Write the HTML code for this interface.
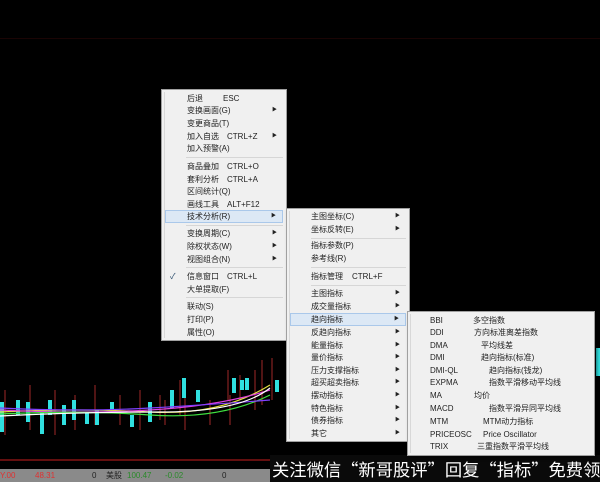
<!DOCTYPE html>
<html><head><meta charset="utf-8"><style>
*{margin:0;padding:0;box-sizing:border-box}
body{width:600px;height:482px;background:#000;position:relative;overflow:hidden;font-family:"Liberation Sans","Noto Sans CJK SC",sans-serif}
.menu{position:absolute;background:#f0f0f0;border:1px solid #a0a0a0;box-shadow:2px 2px 3px rgba(0,0,0,.5)}
.menu:before{content:"";position:absolute;left:2px;top:2px;bottom:2px;width:1px;background:#d8d8d8}
.it{position:absolute;left:3px;right:3px;height:13px;font-size:8px;line-height:13px;color:#222;white-space:nowrap}
.it.hl{background:#dce8f5;border:1px solid #aac8ea;line-height:11px}
.it .a{position:absolute;right:6px;top:0;font-size:5px}
.it .k{position:absolute}
.sep{position:absolute;left:24px;right:3px;height:1px;background:#d6d6d6}
</style></head><body>
<div style="position:absolute;left:0;top:38px;width:600px;height:1px;background:#1a0404"></div>
<svg style="position:absolute;left:0;top:340px" width="600" height="125">
<g stroke="#a02828" stroke-width="1">
<line x1="5" y1="50" x2="5" y2="95"/><line x1="30" y1="45" x2="30" y2="90"/><line x1="55" y1="50" x2="55" y2="95"/><line x1="75" y1="55" x2="75" y2="90"/><line x1="95" y1="45" x2="95" y2="85"/><line x1="120" y1="55" x2="120" y2="85"/><line x1="140" y1="50" x2="140" y2="90"/><line x1="165" y1="60" x2="165" y2="85"/><line x1="185" y1="55" x2="185" y2="90"/><line x1="210" y1="60" x2="210" y2="85"/><line x1="230" y1="55" x2="230" y2="85"/><line x1="255" y1="30" x2="255" y2="70"/><line x1="262" y1="20" x2="262" y2="65"/><line x1="272" y1="18" x2="272" y2="60"/><line x1="160" y1="55" x2="160" y2="80"/><line x1="180" y1="40" x2="180" y2="75"/><line x1="228" y1="30" x2="228" y2="60"/><line x1="240" y1="35" x2="240" y2="60"/>
</g>
<g fill="#30e0e0">
<rect x="0" y="62" width="4" height="30"/><rect x="16" y="60" width="4" height="15"/><rect x="26" y="62" width="4" height="20"/><rect x="40" y="72" width="4" height="22"/><rect x="48" y="60" width="4" height="15"/><rect x="62" y="65" width="4" height="20"/><rect x="72" y="60" width="4" height="20"/><rect x="85" y="72" width="4" height="12"/><rect x="95" y="70" width="4" height="15"/><rect x="110" y="62" width="4" height="10"/><rect x="130" y="75" width="4" height="12"/><rect x="148" y="62" width="4" height="20"/><rect x="170" y="50" width="4" height="18"/><rect x="182" y="38" width="4" height="20"/><rect x="196" y="50" width="4" height="12"/><rect x="232" y="38" width="4" height="15"/><rect x="240" y="40" width="4" height="10"/><rect x="245" y="38" width="4" height="12"/><rect x="275" y="40" width="4" height="12"/><rect x="596" y="8" width="4" height="28"/>
</g>
<g fill="none" stroke-width="1.2">
<path d="M0 72 Q80 68 150 72 T270 45" stroke="#e0e040"/>
<path d="M0 70 Q80 74 150 70 T270 50" stroke="#e040e0"/>
<path d="M0 74 Q80 70 150 75 T270 55" stroke="#40e040"/>
<path d="M0 68 Q80 72 150 68 T270 60" stroke="#8040ff"/>
<path d="M0 76 Q80 72 160 72 T270 48" stroke="#ffffff"/>
</g>
<line x1="0" y1="120" x2="270" y2="120" stroke="#a01818" stroke-width="1.2"/>
</svg>
<div style="position:absolute;left:0;top:469px;width:272px;height:13px;background:#8a8a8a;font-size:8px;line-height:13px;white-space:nowrap">
<span style="color:#e03030;position:absolute;left:0">Y.00</span><span style="color:#e03030;position:absolute;left:35px">48.31</span><span style="color:#222;position:absolute;left:92px">0</span><span style="color:#222;position:absolute;left:106px">美股</span><span style="color:#2a8a2a;position:absolute;left:127px">100.47</span><span style="color:#2a8a2a;position:absolute;left:165px">-0.02</span><span style="color:#222;position:absolute;left:222px">0</span>
</div>
<div style="position:absolute;left:270px;top:455px;width:330px;height:27px;background:#0a0a0a;color:#fff;font-family:'Noto Sans CJK SC',sans-serif;font-size:17.3px;letter-spacing:0;line-height:27px;white-space:nowrap;padding-left:2px;overflow:hidden">关注微信“新哥股评”回复“指标”免费领</div>

<div class="menu" style="left:161px;top:89px;width:126px;height:252px">
<div class="it" style="top:2px;padding-left:22px">后退<span class="k" style="left:58px">ESC</span></div>
<div class="it" style="top:14px;padding-left:22px">变换画面(G)<span class="a">▶</span></div>
<div class="it" style="top:27px;padding-left:22px">变更商品(T)</div>
<div class="it" style="top:40px;padding-left:22px">加入自选<span class="k" style="left:62px">CTRL+Z</span><span class="a">▶</span></div>
<div class="it" style="top:52px;padding-left:22px">加入预警(A)</div>
<div class="sep" style="top:67px"></div>
<div class="it" style="top:70px;padding-left:22px">商品叠加<span class="k" style="left:62px">CTRL+O</span></div>
<div class="it" style="top:83px;padding-left:22px">套利分析<span class="k" style="left:62px">CTRL+A</span></div>
<div class="it" style="top:95px;padding-left:22px">区间统计(Q)</div>
<div class="it" style="top:108px;padding-left:22px">画线工具<span class="k" style="left:62px">ALT+F12</span></div>
<div class="it hl" style="top:120px;padding-left:21px">技术分析(R)<span class="a">▶</span></div>
<div class="sep" style="top:135px"></div>
<div class="it" style="top:137px;padding-left:22px">变换周期(C)<span class="a">▶</span></div>
<div class="it" style="top:150px;padding-left:22px">除权状态(W)<span class="a">▶</span></div>
<div class="it" style="top:163px;padding-left:22px">视图组合(N)<span class="a">▶</span></div>
<div class="sep" style="top:177px"></div>
<div class="it" style="top:180px;padding-left:22px"><span class="k" style="left:5px;color:#246">✓</span>信息窗口<span class="k" style="left:62px">CTRL+L</span></div>
<div class="it" style="top:193px;padding-left:22px">大单提取(F)</div>
<div class="sep" style="top:207px"></div>
<div class="it" style="top:210px;padding-left:22px">联动(S)</div>
<div class="it" style="top:223px;padding-left:22px">打印(P)</div>
<div class="it" style="top:236px;padding-left:22px">属性(O)</div>
</div>

<div class="menu" style="left:286px;top:208px;width:124px;height:234px">
<div class="it" style="top:1px;padding-left:21px">主图坐标(C)<span class="a">▶</span></div>
<div class="it" style="top:14px;padding-left:21px">坐标反转(E)<span class="a">▶</span></div>
<div class="sep" style="top:29px"></div>
<div class="it" style="top:30px;padding-left:21px">指标参数(P)</div>
<div class="it" style="top:43px;padding-left:21px">参考线(R)</div>
<div class="sep" style="top:58px"></div>
<div class="it" style="top:61px;padding-left:21px">指标管理<span class="k" style="left:62px">CTRL+F</span></div>
<div class="sep" style="top:76px"></div>
<div class="it" style="top:78px;padding-left:21px">主图指标<span class="a">▶</span></div>
<div class="it" style="top:91px;padding-left:21px">成交量指标<span class="a">▶</span></div>
<div class="it hl" style="top:104px;padding-left:20px">趋向指标<span class="a">▶</span></div>
<div class="it" style="top:117px;padding-left:21px">反趋向指标<span class="a">▶</span></div>
<div class="it" style="top:130px;padding-left:21px">能量指标<span class="a">▶</span></div>
<div class="it" style="top:142px;padding-left:21px">量价指标<span class="a">▶</span></div>
<div class="it" style="top:155px;padding-left:21px">压力支撑指标<span class="a">▶</span></div>
<div class="it" style="top:167px;padding-left:21px">超买超卖指标<span class="a">▶</span></div>
<div class="it" style="top:180px;padding-left:21px">摆动指标<span class="a">▶</span></div>
<div class="it" style="top:193px;padding-left:21px">特色指标<span class="a">▶</span></div>
<div class="it" style="top:205px;padding-left:21px">债券指标<span class="a">▶</span></div>
<div class="it" style="top:218px;padding-left:21px">其它<span class="a">▶</span></div>
</div>

<div class="menu" style="left:407px;top:311px;width:188px;height:145px">
<div class="it" style="top:2px;padding-left:19px">BBI<span class="k" style="left:62px">多空指数</span></div>
<div class="it" style="top:14px;padding-left:19px">DDI<span class="k" style="left:63px">方向标准离差指数</span></div>
<div class="it" style="top:27px;padding-left:19px">DMA<span class="k" style="left:70px">平均线差</span></div>
<div class="it" style="top:39px;padding-left:19px">DMI<span class="k" style="left:70px">趋向指标(标准)</span></div>
<div class="it" style="top:52px;padding-left:19px">DMI-QL<span class="k" style="left:78px">趋向指标(钱龙)</span></div>
<div class="it" style="top:64px;padding-left:19px">EXPMA<span class="k" style="left:78px">指数平滑移动平均线</span></div>
<div class="it" style="top:77px;padding-left:19px">MA<span class="k" style="left:63px">均价</span></div>
<div class="it" style="top:90px;padding-left:19px">MACD<span class="k" style="left:78px">指数平滑异同平均线</span></div>
<div class="it" style="top:103px;padding-left:19px">MTM<span class="k" style="left:72px">MTM动力指标</span></div>
<div class="it" style="top:116px;padding-left:19px">PRICEOSC<span class="k" style="left:72px">Price Oscillator</span></div>
<div class="it" style="top:128px;padding-left:19px">TRIX<span class="k" style="left:66px">三重指数平滑平均线</span></div>
</div>
</body></html>
